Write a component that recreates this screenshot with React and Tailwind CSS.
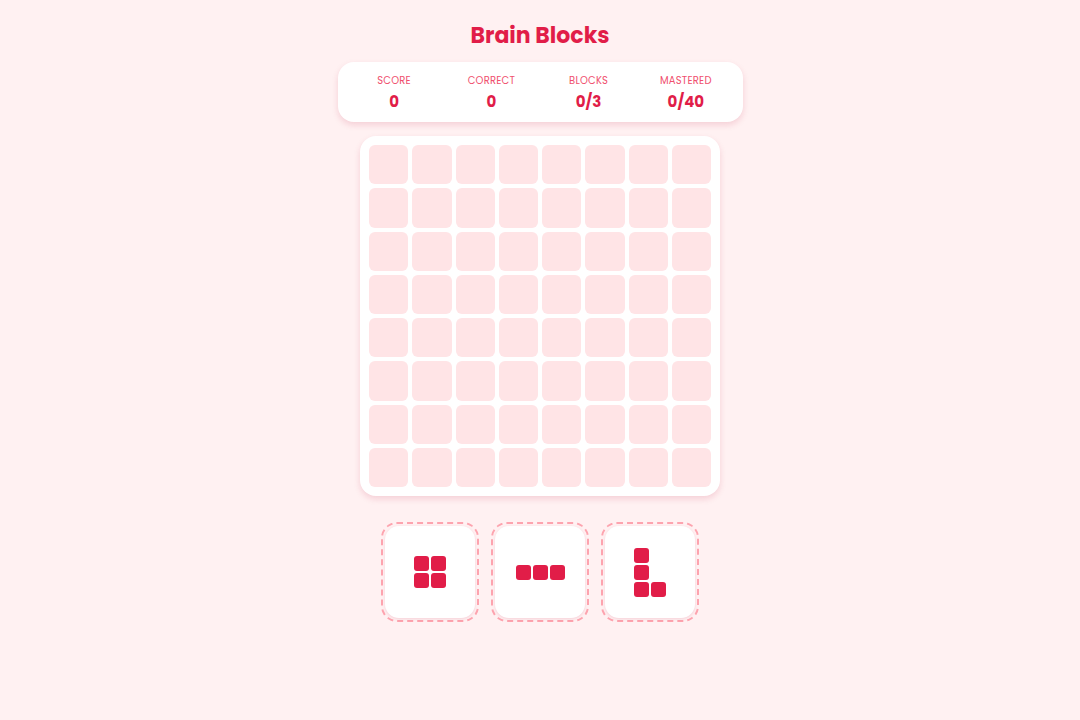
import React from "react";

const font = { fontFamily: '"Poppins", "Open Sans", "Noto Sans", sans-serif' };

function Stat({ label, value }) {
  return (
    <div className="flex flex-1 flex-col items-center">
      <div className="text-[10px] leading-[14px] uppercase tracking-[0.02em] text-[#f0506e]">{label}</div>
      <div className="mt-[4px] text-[15px] leading-[20px] font-bold text-[#e11d48]">{value}</div>
    </div>
  );
}

function Piece({ cells, cols, rows }) {
  return (
    <div className="rounded-[16px] border-2 border-dashed border-[#fda4af] p-[2px]">
      <div className="flex h-[92px] w-[90px] items-center justify-center rounded-[14px] bg-white shadow-[0_1px_3px_rgba(190,18,60,0.15)]">
        <div
          className="grid gap-[2px]"
          style={{ gridTemplateColumns: `repeat(${cols}, 15px)`, gridTemplateRows: `repeat(${rows}, 15px)` }}
        >
          {cells.map((c, i) => (
            <div
              key={i}
              className={c ? "rounded-[3px] bg-[#e11d48]" : ""}
            />
          ))}
        </div>
      </div>
    </div>
  );
}

export default function App() {
  const grid = Array.from({ length: 64 });
  return (
    <div className="min-h-[720px] w-full bg-[#fff1f2]" style={font}>
      <div className="flex flex-col items-center pt-[20px]">
        <h1 className="text-[22px] leading-[32px] font-bold text-[#e11d48]">Brain Blocks</h1>
        <div className="mt-[10px] flex h-[60px] w-[405px] items-center rounded-[16px] bg-white px-[8px] pt-[2px] shadow-[0_3px_6px_rgba(190,18,60,0.15)]">
          <Stat label="Score" value="0" />
          <Stat label="Correct" value="0" />
          <Stat label="Blocks" value="0/3" />
          <Stat label="Mastered" value="0/40" />
        </div>
        <div className="mt-[14px] h-[360px] w-[360px] rounded-[16px] bg-white p-[9px] shadow-[0_3px_6px_rgba(190,18,60,0.15)]">
          <div className="grid h-full w-full grid-cols-8 grid-rows-8 gap-[4px]">
            {grid.map((_, i) => (
              <div key={i} className="rounded-[6px] bg-[#ffe4e6]" />
            ))}
          </div>
        </div>
        <div className="mt-[26px] flex gap-[12px]">
          <Piece cols={2} rows={2} cells={[1, 1, 1, 1]} />
          <Piece cols={3} rows={1} cells={[1, 1, 1]} />
          <Piece cols={2} rows={3} cells={[1, 0, 1, 0, 1, 1]} />
        </div>
      </div>
    </div>
  );
}
